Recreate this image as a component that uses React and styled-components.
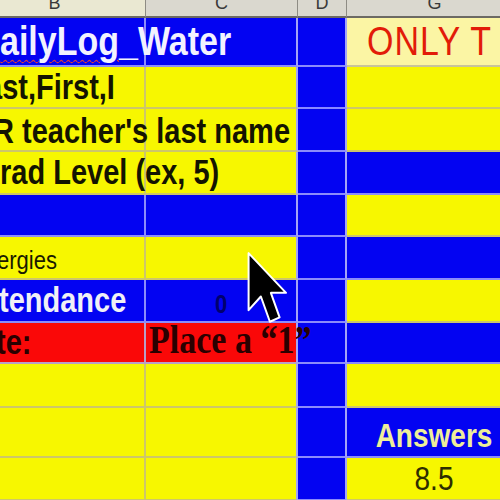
import styled, { createGlobalStyle } from "styled-components"

const GlobalStyle = createGlobalStyle`
  html, body {
    margin: 0;
    padding: 0;
    background: #f7f700;
    overflow: hidden;
  }
`

const TONES = {
  blue: { bg: "#0303f2", line: "#8c8cfa" },
  yellow: { bg: "#f7f700", line: "#cdc66a" },
  red: { bg: "#fa0808", line: "#b8a0c8" },
  pale: { bg: "#fbf5a4", line: "#c9c49a" },
}

const Page = styled.div`
  width: 500px;
  height: 500px;
  overflow: hidden;
  position: relative;
  font-family: "Liberation Sans", Arial, sans-serif;
`

const Sheet = styled.div`
  display: grid;
  grid-template-columns: 146px 152px 49px 176px;
  grid-template-rows: 18px 49px 42px 43px 43px 42px 43px 43px 41px 44px 50px 43px;
`

const HeaderCell = styled.div`
  background: ${p => (p.$active ? "#eae8d2" : "#dad8cf")};
  border-right: 1px solid #8e8c84;
  border-bottom: 2px solid #6c6a64;
  display: flex;
  align-items: flex-end;
  justify-content: center;
  overflow: hidden;
  padding-right: ${p => p.$nudge || 0}px;
`

const HeaderLetter = styled.span`
  font-size: 18px;
  line-height: 18px;
  margin-bottom: 4px;
  color: #3a3a3a;
`

const Cell = styled.div`
  background: ${p => TONES[p.$tone].bg};
  border-right: 2px solid ${p => p.$edge || TONES[p.$tone].line};
  border-bottom: 2px solid ${p => TONES[p.$tone].line};
  display: flex;
  align-items: flex-end;
  justify-content: ${p => p.$align || "flex-start"};
  padding-bottom: ${p => p.$pb || 0}px;
  padding-left: ${p => p.$pl || 0}px;
  min-width: 0;
`

const Label = styled.span`
  display: inline-block;
  position: relative;
  z-index: 1;
  white-space: nowrap;
  line-height: 1;
  font-size: ${p => p.$size || 29}px;
  font-weight: ${p => (p.$light ? 400 : 700)};
  font-family: ${p => (p.$serif ? '"Liberation Serif", "Times New Roman", serif' : '"Liberation Sans", Arial, sans-serif')};
  color: ${p => p.$color || "#141400"};
  margin-left: ${p => p.$shift || 0}px;
  letter-spacing: ${p => p.$track || 0}px;
  transform: scaleY(1.18);
  transform-origin: 50% 85%;
`

const Squiggle = styled.span`
  text-decoration-line: underline;
  text-decoration-style: wavy;
  text-decoration-color: #e23a3a;
  text-decoration-thickness: 1px;
  text-underline-offset: 3px;
`

const Cursor = styled.svg`
  position: absolute;
  left: 246px;
  top: 251px;
  width: 42px;
  height: 74px;
  z-index: 5;
`

const LAV = "#a4a4f6"

const rows = [
  {
    b: { tone: "blue", pb: 5, text: <Label $size={34} $color="#f2f2ff"><Squiggle>ailyLog</Squiggle>_Water</Label> },
    c: { tone: "blue" },
    g: { tone: "pale", pb: 5, pl: 20, text: <Label $size={34} $light $track={1} $color="#e21c08">ONLY T</Label> },
  },
  {
    b: { tone: "yellow", pb: 3, text: <Label $shift={-14}>ast,First,I</Label> },
    c: { tone: "yellow" },
    g: { tone: "yellow" },
  },
  {
    b: { tone: "yellow", pb: 2, text: <Label $shift={-7}>R teacher's last name</Label> },
    c: { tone: "yellow" },
    g: { tone: "yellow" },
  },
  {
    b: { tone: "yellow", pb: 4, text: <Label $shift={0}>rad Level (ex, 5)</Label> },
    c: { tone: "yellow" },
    g: { tone: "blue" },
  },
  {
    b: { tone: "blue" },
    c: { tone: "blue" },
    g: { tone: "yellow" },
  },
  {
    b: { tone: "yellow", pb: 5, text: <Label $size={22} $light $shift={-3} $color="#1a1a00">ergies</Label> },
    c: { tone: "yellow" },
    g: { tone: "blue" },
  },
  {
    b: { tone: "blue", pb: 4, text: <Label $shift={-1} $color="#f0f0f6">tendance</Label> },
    c: { tone: "blue", pb: 4, align: "center", text: <Label $size={22} $color="#00006e">0</Label> },
    g: { tone: "yellow" },
  },
  {
    b: { tone: "red", pb: 3, text: <Label $shift={-4} $color="#2a0000">te:</Label> },
    c: { tone: "red", pb: 3, pl: 3, text: <Label $size={34} $serif $color="#2a0000">Place a “1”</Label> },
    g: { tone: "blue" },
  },
  {
    b: { tone: "yellow" },
    c: { tone: "yellow" },
    g: { tone: "yellow" },
  },
  {
    b: { tone: "yellow" },
    c: { tone: "yellow" },
    g: { tone: "blue", pb: 4, align: "center", text: <Label $size={28} $color="#eeee9a">Answers</Label> },
  },
  {
    b: { tone: "yellow" },
    c: { tone: "yellow" },
    g: { tone: "yellow", pb: 4, align: "center", text: <Label $size={28} $light $color="#2e2e00">8.5</Label> },
  },
]

const SheetCell = ({ tone, pb, pl, align, text, edge }) => (
  <Cell $tone={tone} $pb={pb} $pl={pl} $align={align} $edge={edge}>
    {text}
  </Cell>
)

const App = () => {
  return (
    <Page>
      <GlobalStyle />
      <Sheet>
        <HeaderCell $active $nudge={36}><HeaderLetter>B</HeaderLetter></HeaderCell>
        <HeaderCell><HeaderLetter>C</HeaderLetter></HeaderCell>
        <HeaderCell><HeaderLetter>D</HeaderLetter></HeaderCell>
        <HeaderCell><HeaderLetter>G</HeaderLetter></HeaderCell>

        {rows.map((row, i) => [
          <SheetCell key={`b${i}`} {...row.b} />,
          <SheetCell key={`c${i}`} {...row.c} edge={LAV} />,
          <SheetCell key={`d${i}`} tone="blue" edge={LAV} />,
          <SheetCell key={`g${i}`} {...row.g} />,
        ])}
      </Sheet>

      <Cursor viewBox="0 0 13 20.5" preserveAspectRatio="none">
        <polygon
          points="0.8,0.6 0.8,16.4 4.6,12.6 7.4,19.6 10.4,18.4 7.7,11.6 12.4,11.6"
          fill="#000"
          stroke="#fff"
          strokeWidth="2"
          vectorEffect="non-scaling-stroke"
          strokeLinejoin="round"
        />
      </Cursor>
    </Page>
  )
}

export default App
